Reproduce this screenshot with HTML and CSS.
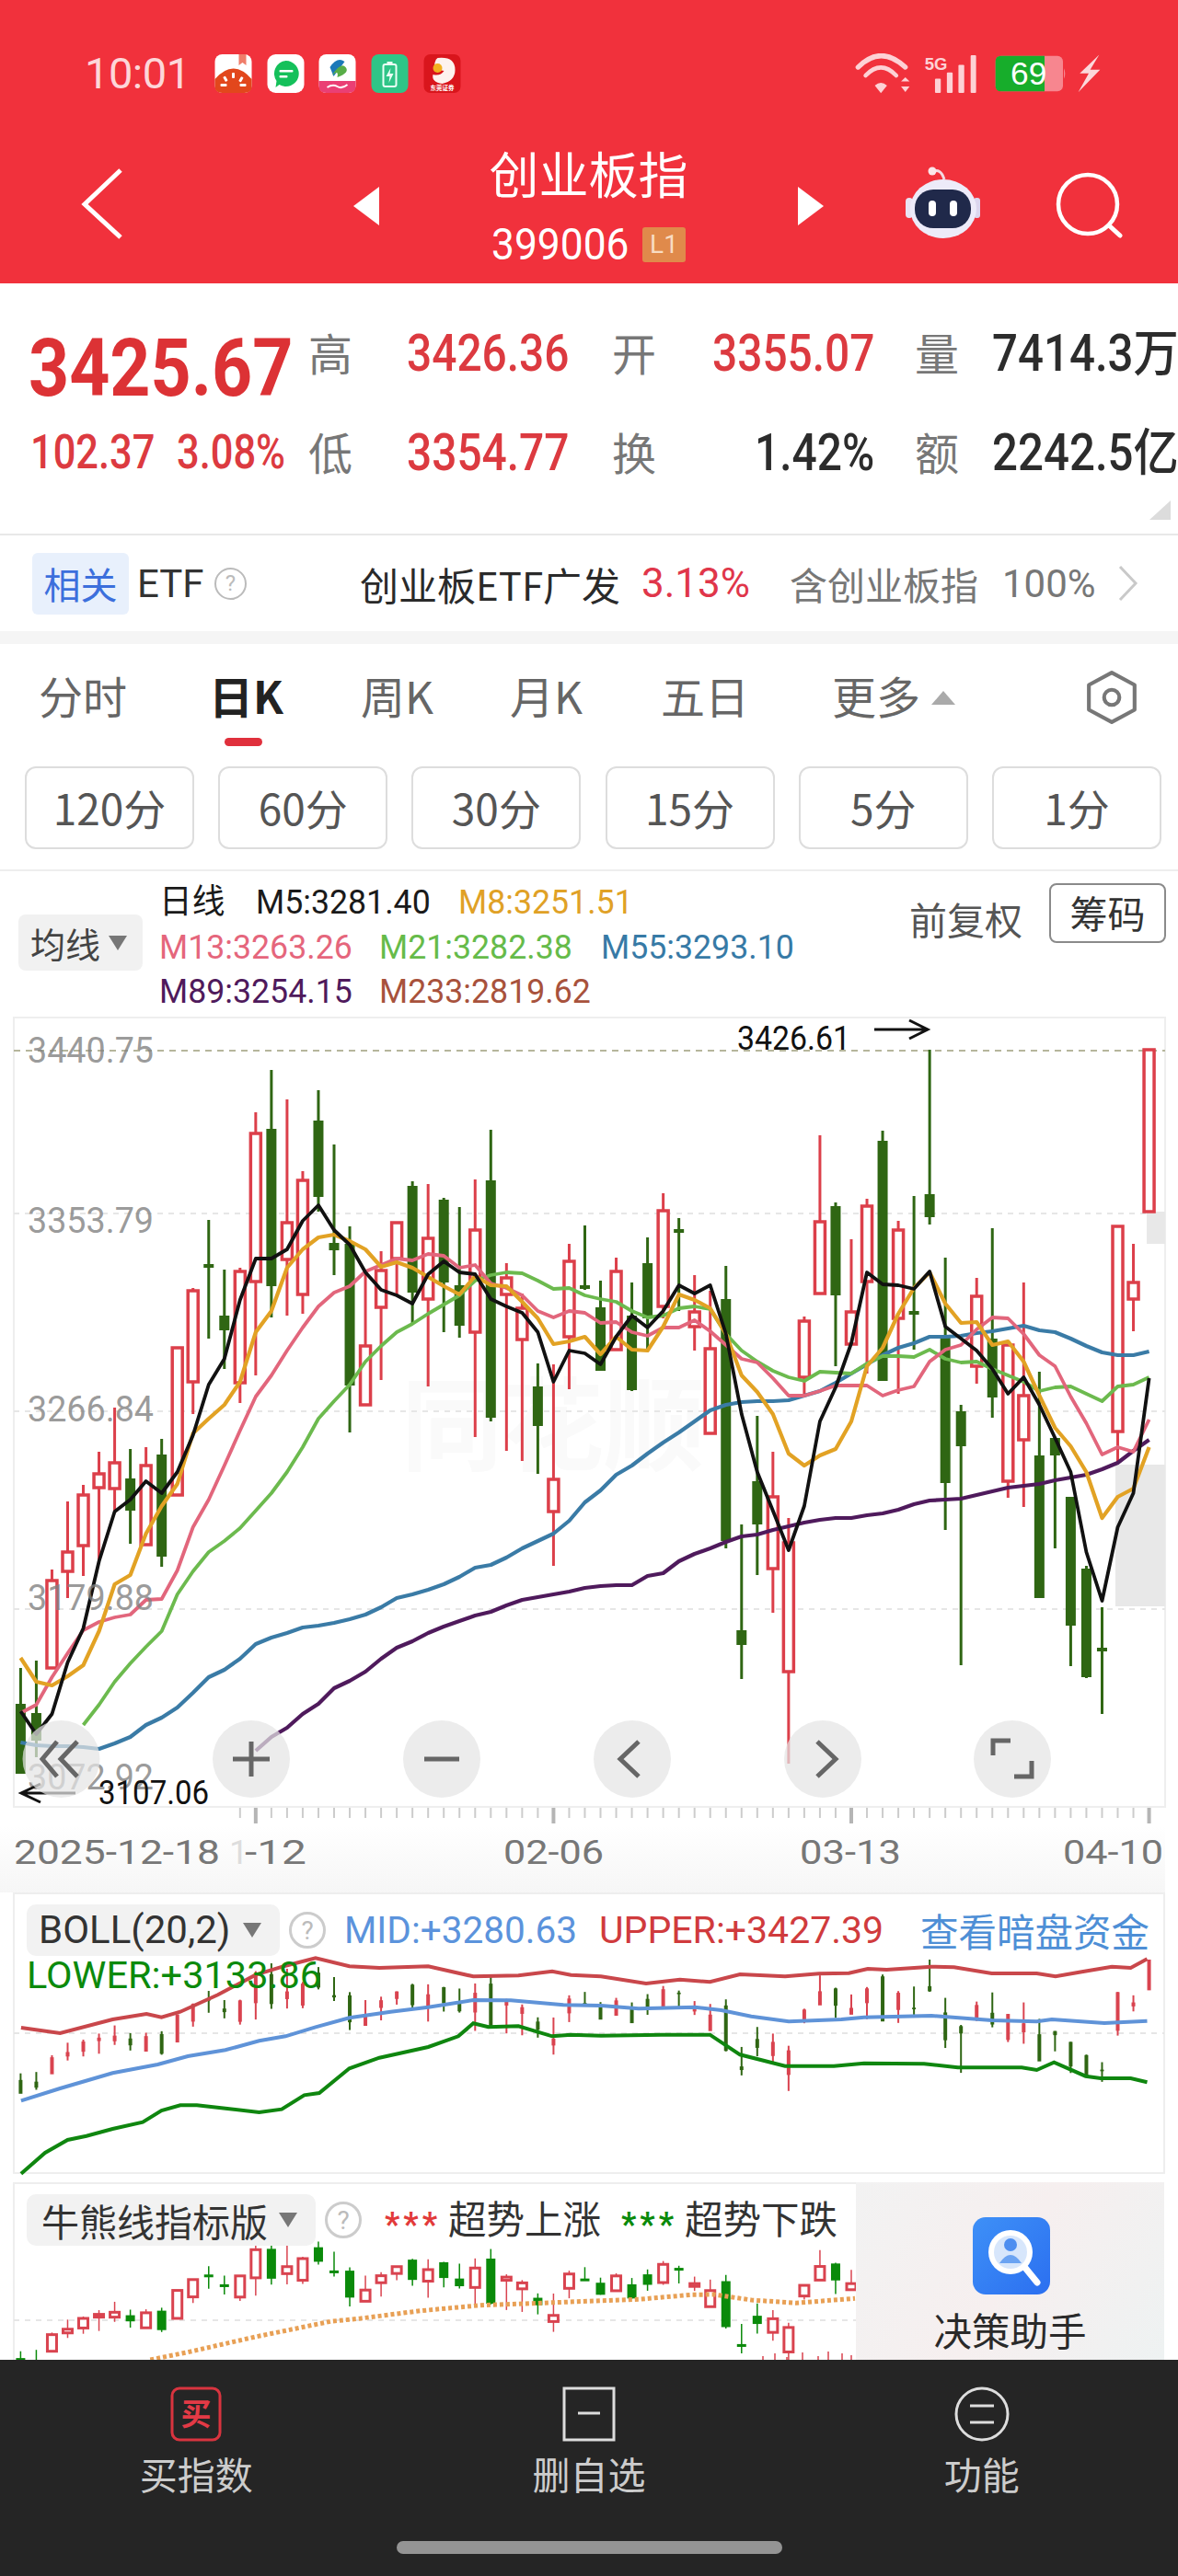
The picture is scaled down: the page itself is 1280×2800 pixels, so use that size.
FILE: index.html
```html
<!DOCTYPE html>
<html lang="zh-CN">
<head>
<meta charset="utf-8">
<title>创业板指 399006</title>
<link rel="stylesheet" href="styles.css">
</head>
<body>
<div class="phone">

<header class="top">
  <div class="status">
    <span class="time">10:01</span>
    <div class="apps">
      <svg class="app" viewBox="0 0 40 42"><rect width="40" height="42" rx="8" fill="#fff"/><path d="M0 27Q20 4 40 27V34Q40 42 32 42H8Q0 42 0 34Z" fill="#e2471c"/><path d="M26 0h8v12l-4-3-4 3z" fill="#ef7d6a"/><g fill="#fff"><rect x="18.500" y="20" width="3" height="6" rx="1"/><rect x="10" y="24" width="3" height="6" rx="1" transform="rotate(-30 11 27)"/><rect x="27" y="24" width="3" height="6" rx="1" transform="rotate(30 28 27)"/><rect x="6" y="32" width="7" height="3" rx="1"/><rect x="27" y="32" width="7" height="3" rx="1"/></g></svg>
      <svg class="app" viewBox="0 0 40 42"><rect width="40" height="42" rx="9" fill="#fff"/><path d="M20 7a14 14 0 1 1-7 26l-4 3 1-7A14 14 0 0 1 20 7z" fill="#14c05a"/><rect x="13" y="17" width="15" height="2.500" rx="1" fill="#fff"/><rect x="13" y="23" width="9" height="2.500" rx="1" fill="#fff"/></svg>
      <svg class="app" viewBox="0 0 40 42"><rect width="40" height="42" rx="8" fill="#fff"/><path d="M0 29H40V34Q40 42 32 42H8Q0 42 0 34Z" fill="#ea3f74"/><path d="M12 14Q20 2 28 8L16 24Z" fill="#1b78b8"/><path d="M14 23Q24 8 29 14T20 25Q22 16 14 23Z" fill="#58ad47"/><path d="M9 36q6-4 11-1t11-2" stroke="#fff" stroke-width="2" fill="none"/></svg>
      <svg class="app" viewBox="0 0 40 42"><rect width="40" height="42" rx="8" fill="#2fc587"/><rect x="13" y="11" width="14" height="24" rx="2" fill="none" stroke="#eafff5" stroke-width="2"/><rect x="17" y="8" width="6" height="3" fill="#eafff5"/><path d="M21 15l-5 9h4l-1 7 5-10h-4z" fill="#eafff5"/></svg>
      <svg class="app" viewBox="0 0 40 42"><rect width="40" height="42" rx="7" fill="#d9151c"/><path d="M15 4Q34 2 34 17Q34 29 20 32Q8 30 10 22Q18 24 22 18Q10 16 12 9Q13 5 15 4Z" fill="#fdf2ee"/><circle cx="15" cy="15" r="5" fill="#f2b01f"/><text class="app-txt" x="20" y="39" text-anchor="middle">东莞证券</text></svg>
    </div>
    <div class="sys">
      <svg class="ic-wifi" viewBox="25 20 190 135"><g fill="none" stroke="#fdd1d5" stroke-linecap="round"><path d="M35 65Q110-10 190 65" stroke-width="16"/><path d="M60 92Q110 40 160 92" stroke-width="14"/></g><g fill="#fdd1d5"><path d="M90 125Q110 108 130 125L110 150Z"/><path d="M176 112L190 98 204 112Z"/><path d="M176 128L190 146 204 128Z"/></g></svg>
      <svg class="ic-signal" viewBox="250 22 175 133"><text class="sig-txt" x="252" y="76">5G</text><g fill="#fdd1d5"><rect x="286" y="105" width="19" height="47" rx="3"/><rect x="325" y="85" width="19" height="67" rx="3"/><rect x="363" y="60" width="19" height="92" rx="3"/><rect x="403" y="28" width="18" height="124" rx="3"/></g></svg>
      <svg class="ic-batt" viewBox="480 30 240 125"><rect x="485" y="35" width="220" height="115" rx="18" fill="#f7868f"/><path d="M503 35H645V150H503Q485 150 485 132V53Q485 35 503 35Z" fill="#17ad2b"/><path d="M708 75q8 17 0 35z" fill="#f7868f"/><text class="batt-txt" x="593" y="130" text-anchor="middle">69</text></svg>
      <svg class="ic-bolt" viewBox="750 28 80 130"><path d="M825 30L760 92 790 92 755 155 828 80 795 80Z" fill="#fbd8db"/></svg>
    </div>
  </div>
  <div class="nav">
    <svg class="back" viewBox="88 183 46 78"><path d="M131 185L92 222 131 258" fill="none" stroke="#fff" stroke-width="5"/></svg>
    <svg class="tri-l" viewBox="0 0 28 42"><path d="M28 0V42L0 21Z" fill="#fff"/></svg>
    <div class="title-box">
      <div class="title">创业板指</div>
      <div class="code-row"><span class="code"><span class="cond code-in">399006</span></span><span class="lv">L1</span></div>
    </div>
    <svg class="tri-r" viewBox="0 0 28 42"><path d="M0 0V42L28 21Z" fill="#fff"/></svg>
    <svg class="robot" viewBox="984 180 81 80">
      <path d="M1013 187Q1022 182 1026 195" fill="none" stroke="#f3d9e2" stroke-width="3"/><circle cx="1013" cy="186" r="4.500" fill="#fbe6ea"/>
      <rect x="984" y="215" width="8" height="22" rx="4" fill="#e9e3f3"/><rect x="1058" y="215" width="7" height="22" rx="3" fill="#dcd6ee"/>
      <ellipse cx="1025" cy="227" rx="36" ry="32" fill="#edebf9"/>
      <rect x="994" y="206" width="61" height="42" rx="20" fill="#20294a"/>
      <rect x="1009" y="218" width="8" height="17" rx="4" fill="#fff"/><rect x="1032" y="218" width="8" height="17" rx="4" fill="#fff"/>
    </svg>
    <svg class="search" viewBox="1145 186 74 74"><circle cx="1180" cy="222" r="32" fill="none" stroke="#fff" stroke-width="4.500"/><path d="M1203 245L1215 256" stroke="#fff" stroke-width="5" stroke-linecap="round"/></svg>
  </div>
</header>

<section class="quote">
  <div class="price"><span class="cond bigp">3425.67</span></div>
  <div class="lab">高</div><div class="val up"><span class="cond">3426.36</span></div>
  <div class="lab">开</div><div class="val up"><span class="cond">3355.07</span></div>
  <div class="lab">量</div><div class="val dark"><span class="cond wide">7414.3万</span></div>
  <div class="chg"><span class="cond c1">102.37</span><span class="cond c2">3.08%</span></div>
  <div class="lab">低</div><div class="val up"><span class="cond">3354.77</span></div>
  <div class="lab">换</div><div class="val dark r"><span class="cond">1.42%</span></div>
  <div class="lab">额</div><div class="val dark"><span class="cond wide">2242.5亿</span></div>
  <span class="fold"></span>
</section>

<section class="etf">
  <span class="etf-tag">相关</span>
  <span class="etf-name">ETF</span>
  <span class="qmark q-etf">?</span>
  <span class="etf-fund">创业板ETF广发</span>
  <span class="etf-pct">3.13%</span>
  <span class="etf-hold">含创业板指</span>
  <span class="etf-hold-n">100%</span>
  <svg class="etf-more" viewBox="0 0 22 40"><path d="M2 2L19 20 2 38" fill="none" stroke="#c9c9c9" stroke-width="3"/></svg>
</section>
<div class="gap"></div>

<nav class="tabs">
  <span class="tab">分时</span>
  <span class="tab on">日K</span>
  <span class="tab">周K</span>
  <span class="tab">月K</span>
  <span class="tab">五日</span>
  <span class="tab more">更多<i class="up-tri"></i></span>
  <svg class="hex" viewBox="0 0 56 58"><path d="M28 3L52 16V42L28 55 4 42V16Z" fill="none" stroke="#777" stroke-width="4" stroke-linejoin="round"/><circle cx="28" cy="29" r="8" fill="none" stroke="#777" stroke-width="4"/></svg>
</nav>

<div class="periods">
  <span class="period">120分</span><span class="period">60分</span><span class="period">30分</span><span class="period">15分</span><span class="period">5分</span><span class="period">1分</span>
</div>

<section class="legend">
  <div class="chip ma-chip">均线<i class="dn-tri"></i></div>
  <div class="leg-rows">
    <div class="leg-row"><span class="w-a ink"><span class="cond">日线</span></span><span class="w-b ink"><span class="cond">M5:3281.40</span></span><span class="c-m8"><span class="cond">M8:3251.51</span></span></div>
    <div class="leg-row"><span class="w-c c-m13"><span class="cond">M13:3263.26</span></span><span class="w-d c-m21"><span class="cond">M21:3282.38</span></span><span class="c-m55"><span class="cond">M55:3293.10</span></span></div>
    <div class="leg-row"><span class="w-c c-m89"><span class="cond">M89:3254.15</span></span><span class="c-m233"><span class="cond">M233:2819.62</span></span></div>
  </div>
  <div class="adj">前复权</div>
  <div class="chips">筹码</div>
</section>

<svg id="kline" class="kline" viewBox="0 1105 1280 952" width="1280" height="952">
  <defs>
    <linearGradient id="axisbg" x1="0" y1="0" x2="0" y2="1"><stop offset="0" stop-color="#fff"/><stop offset="1" stop-color="#f6f6f6"/></linearGradient>
  </defs>
  <rect x="0" y="1985" width="1266" height="72" fill="url(#axisbg)"/>
  <rect class="frame" x="15" y="1106" width="1251" height="858"/>
  <text class="wm" x="436" y="1590">同花顺</text>
  <path class="grid-top" d="M15 1142H1266"/>
  <path class="grid" d="M15 1319H1266M15 1534H1266M15 1749H1266"/>
  <rect class="shade" x="1246" y="1317" width="20" height="35"/>
  <rect class="shade" x="1212" y="1592" width="54" height="154"/>
  <g id="k-candles"></g>
  <g id="k-lines"></g>
  <g class="ylab">
    <text x="30" y="1155" textLength="137" lengthAdjust="spacingAndGlyphs">3440.75</text>
    <text x="30" y="1340" textLength="137" lengthAdjust="spacingAndGlyphs">3353.79</text>
    <text x="30" y="1545" textLength="137" lengthAdjust="spacingAndGlyphs">3266.84</text>
    <text x="30" y="1750" textLength="137" lengthAdjust="spacingAndGlyphs">3179.88</text>
    <text x="30" y="1945" textLength="137" lengthAdjust="spacingAndGlyphs">3072.92</text>
  </g>
  <g class="note">
    <text x="801" y="1141" textLength="123" lengthAdjust="spacingAndGlyphs">3426.61</text>
    <path d="M950 1119H1007M988 1109L1008 1119 988 1129"/>
    <path d="M82 1949H24M44 1939L23 1949 44 1959"/>
  </g>
  <g class="fab-bg">
    <circle cx="66.500" cy="1912" r="42"/><circle cx="273" cy="1912" r="42"/><circle cx="480" cy="1912" r="42"/><circle cx="687" cy="1912" r="42"/><circle cx="894" cy="1912" r="42"/><circle cx="1100" cy="1912" r="42"/>
  </g>
  <g class="fab-ic">
    <path d="M62 1893L46 1912 62 1931M84 1893L66 1912 84 1931"/>
    <path d="M273 1893V1931M253 1912H293"/>
    <path d="M461 1912H499"/>
    <path d="M694 1893L674 1912 694 1931"/>
    <path d="M888 1893L908 1912 888 1931"/>
    <path d="M1080 1908V1892H1099M1122 1914V1931H1103" transform="translate(-1 0)"/>
  </g>
  <text class="note-t" x="107" y="1961" textLength="120" lengthAdjust="spacingAndGlyphs">3107.06</text>
  <g id="k-ticks"></g>
  <g class="dates">
    <text x="15" y="2026" textLength="224" lengthAdjust="spacingAndGlyphs">2025-12-18</text>
    <text class="faint" x="249" y="2026">1</text>
    <text x="266" y="2026" textLength="67" lengthAdjust="spacingAndGlyphs">-12</text>
    <text x="547" y="2026" textLength="109" lengthAdjust="spacingAndGlyphs">02-06</text>
    <text x="869" y="2026" textLength="110" lengthAdjust="spacingAndGlyphs">03-13</text>
    <text x="1155" y="2026" textLength="109" lengthAdjust="spacingAndGlyphs">04-10</text>
  </g>
</svg>

<section class="panel boll">
  <svg id="bollsvg" viewBox="0 2057 1280 315" width="1280" height="315">
    <rect class="frame" x="15" y="2058" width="1250" height="304"/>
    <path class="grid" d="M15 2210H1265"/>
  </svg>
  <div class="head boll-head">
    <div class="head-row">
      <div class="chip boll-chip">BOLL(20,2)<i class="dn-tri"></i></div>
      <span class="qmark q-boll">?</span>
      <span class="mid">MID:+3280.63</span>
      <span class="upper">UPPER:+3427.39</span>
      <span class="dark-pool">查看暗盘资金</span>
    </div>
    <div class="lower">LOWER:+3133.86</div>
  </div>
</section>

<section class="panel bull">
  <div class="bull-chart">
    <svg id="bullsvg" viewBox="0 2372 930 193" width="930" height="193">
      <path class="frame-edge" d="M15 2565V2373H930"/>
      <path class="grid" d="M15 2522H930"/>
    </svg>
    <div class="head bull-head">
      <div class="chip bull-chip">牛熊线指标版<i class="dn-tri"></i></div>
      <span class="qmark q-bull">?</span>
      <span class="stars s-red">***</span><span class="trend">超势上涨</span>
      <span class="stars s-green">***</span><span class="trend">超势下跌</span>
    </div>
  </div>
  <aside class="promo">
    <svg class="promo-ic" viewBox="0 0 84 84"><defs><linearGradient id="pb" x1="0" y1="0" x2="1" y2="1"><stop offset="0" stop-color="#3e90f7"/><stop offset="1" stop-color="#2b6ff0"/></linearGradient></defs><rect width="84" height="84" rx="14" fill="url(#pb)"/><circle cx="41" cy="38" r="24" fill="#fff"/><circle cx="41" cy="38" r="18" fill="#d7e6fb"/><circle cx="41" cy="30" r="7" fill="#4d8ef0"/><path d="M29 50Q41 32 53 50Z" fill="#6ba3f2"/><path d="M57 55L70 71" stroke="#fff" stroke-width="7" stroke-linecap="round"/></svg>
    <div class="promo-txt">决策助手</div>
  </aside>
</section>

<footer class="foot">
  <div class="foot-grid">
    <div class="foot-item">
      <svg class="foot-ic" viewBox="0 0 60 60"><rect x="4" y="2" width="52" height="56" rx="8" fill="none" stroke="#d9343f" stroke-width="3"/><text class="buy-txt" x="30" y="42" text-anchor="middle">买</text></svg>
      <span class="foot-lab">买指数</span>
    </div>
    <div class="foot-item">
      <svg class="foot-ic" viewBox="0 0 60 60"><rect x="3" y="2" width="54" height="56" fill="none" stroke="#ddd" stroke-width="3"/><path d="M18 29H42" stroke="#ddd" stroke-width="3"/></svg>
      <span class="foot-lab">删自选</span>
    </div>
    <div class="foot-item">
      <svg class="foot-ic" viewBox="0 0 60 60"><circle cx="30" cy="30" r="28" fill="none" stroke="#ddd" stroke-width="3"/><path d="M17 21H43M17 39H43" stroke="#ddd" stroke-width="3"/></svg>
      <span class="foot-lab">功能</span>
    </div>
  </div>
  <div class="home"></div>
</footer>

</div>
<script src="chart.js"></script>
</body>
</html>
```

FILE: styles.css
```css
*{box-sizing:border-box}
html,body{margin:0;padding:0;background:#fff}
body{font-family:Roboto,"Noto Sans CJK SC",sans-serif;color:#333}
.phone{width:1280px;height:2800px;overflow:hidden;position:relative;background:#fff}
svg{display:block}
i{font-style:normal}
.cond{display:inline-block;transform:scaleX(.88);transform-origin:left center;white-space:nowrap}

/* header */
.top{height:308px;background:#f1313c;padding-top:59px}
.status{display:flex;height:42px;padding:0 84px 0 92px;align-items:center}
.time{width:141px;font-size:47px;line-height:42px;color:#fdd6d9;letter-spacing:-.5px}
.apps{display:flex;gap:15.700px}
.app{width:41px;height:42px}
.app-txt{font:700 6.500px "Noto Sans CJK SC",sans-serif;fill:#fff}
.sys{margin-left:auto;display:flex;align-items:center}
.ic-wifi{width:63px;height:45px}
.ic-signal{width:58px;height:44px;margin-left:12px}
.sig-txt{font:700 56px "Liberation Sans",sans-serif;fill:#fdd1d5}
.ic-batt{width:80px;height:42px;margin-left:18px}
.batt-txt{font:500 106px "Liberation Sans",sans-serif;fill:#fff}
.ic-bolt{width:26px;height:44px;margin-left:10px}
.nav{display:grid;grid-template-columns:384px 28px 455px 27px 90px 81px 82px 74px;margin-top:57px}
.back{width:46px;height:78px;margin:25px 0 0 88px}
.tri-l,.tri-r{width:28px;height:42px;margin-top:45px}
.title-box{display:flex;flex-direction:column;align-items:center}
.title{font:400 54px/60px "Noto Sans CJK SC",sans-serif;color:#fff}
.code-row{display:flex;align-items:center;gap:16px;margin-top:18px;height:60px}
.code{display:block;width:148px;font:400 49px/60px Roboto,sans-serif;color:#fff}
.code-in{transform:scaleX(.905)}
.lv{width:47px;height:38px;background:#e08a4b;color:#f8dcc2;font:400 28px/38px Roboto,sans-serif;text-align:center;border-radius:3px}
.robot{grid-column:6;width:81px;height:80px;margin-top:22px}
.search{grid-column:8;width:74px;height:74px;margin-top:28px}

/* quote */
.quote{height:274px;border-bottom:2px solid #e8e8e8;padding:22px 0 0 33px;display:grid;grid-template-columns:302px 107px 223px 109px 220px 84px 202px;grid-template-rows:108px 108px;position:relative}
.price{align-self:end;display:flex;height:76px;margin-left:-2px}
.bigp{font:700 88px/76px Roboto,sans-serif;color:#dc3235;transform:scaleX(.875)}
.lab{font:400 48px/104px "Noto Sans CJK SC",sans-serif;color:#777}
.val{font:400 55px/108px Roboto,"Noto Sans CJK SC",sans-serif;white-space:nowrap}
.val .cond{transform:scaleX(.87)}
.val .wide{transform:scaleX(.895)}
.up{color:#dc3a40;font-weight:500}
.dark{color:#2c2c2c;font-weight:500}
.r{padding-left:46px}
.chg{font:500 52px/108px Roboto,sans-serif;color:#dc3a40;display:flex}
.chg .cond{transform:scaleX(.835)}
.c1{width:160px}
.c2{margin-left:-1px}
.fold{position:absolute;right:8px;bottom:15px;width:0;height:0;border-style:solid;border-width:0 0 21px 23px;border-color:transparent transparent #dcdcdc transparent}

/* etf */
.etf{height:104px;display:flex;align-items:center;padding-left:35px;font-family:"Noto Sans CJK SC",sans-serif}
.etf-tag{width:105px;height:67px;background:#e8f0fc;border-radius:6px;color:#3c6fdc;font-size:40px;line-height:67px;text-align:center}
.etf-name{font:400 42px Roboto,sans-serif;margin-left:9px;width:84px;color:#333}
.qmark{display:inline-block;border:2px solid #bbb;border-radius:50%;color:#bbb;text-align:center;font-family:Roboto,sans-serif}
.q-etf{width:35px;height:35px;font-size:24px;line-height:31px}
.etf-fund{margin-left:123px;font-size:42px;color:#2a2a2a;width:306px;white-space:nowrap}
.etf-pct{font:400 44px Roboto,sans-serif;color:#e0364a;width:161px}
.etf-hold{font-size:41px;color:#777;width:231px}
.etf-hold-n{font:400 42px Roboto,sans-serif;color:#777;width:126px;white-space:nowrap}
.etf-more{width:22px;height:40px}
.gap{height:14px;background:#f5f5f5}

/* tabs */
.tabs{height:133px;display:grid;grid-template-columns:185px 165px 162px 164px 186px 275px 60px;padding:25px 0 0 42px;position:relative}
.tab{font:400 48px/60px "Noto Sans CJK SC",sans-serif;color:#666;position:relative;white-space:nowrap}
.tab.on{color:#222;font-weight:700}
.tab.on::after{content:"";position:absolute;left:17px;top:77px;width:41px;height:9px;border-radius:5px;background:#e0303c}
.up-tri{display:inline-block;width:0;height:0;border-style:solid;border-width:0 13px 15px;border-color:transparent transparent #aaa;margin-left:12px;vertical-align:10px}
.hex{width:58px;height:60px;margin-top:3px}

/* periods */
.periods{height:114px;padding-bottom:22px;border-bottom:2px solid #eee;display:grid;grid-template-columns:repeat(6,184px);gap:26.200px;padding-left:27px}
.period{border:2px solid #ddd;border-radius:12px;text-align:center;font:400 46px/84px "Noto Sans CJK SC",sans-serif;color:#555}

/* legend */
.legend{height:158px;display:flex;padding-left:20px;position:relative}
.chip{background:#f1f1f1;border-radius:8px;display:flex;align-items:center;font-family:"Noto Sans CJK SC",sans-serif;white-space:nowrap}
.ma-chip{width:135px;height:61px;margin-top:47px;padding-left:13px;font-size:38px;color:#444}
.dn-tri{display:inline-block;width:0;height:0;border-style:solid;border-width:16px 10px 0;border-color:#777 transparent transparent;margin-left:9px}
.leg-rows{margin:10px 0 0 18px;width:800px;font:400 37px/48.500px Roboto,"Noto Sans CJK SC",sans-serif}
.leg-row{display:flex;height:48.500px}
.leg-row .cond{transform:scaleX(.965)}
.w-a{width:105px}
.w-b{width:220px}
.w-c{width:239px}
.w-d{width:241px}
.ink{color:#1a1a1a}
.c-m8{color:#e0a126}
.c-m13{color:#e5667c}
.c-m21{color:#66bb4a}
.c-m55{color:#377aa6}
.c-m89{color:#4f1a5c}
.c-m233{color:#a8523c}
.adj{position:absolute;left:988px;top:25px;font:400 41px/52px "Noto Sans CJK SC",sans-serif;color:#555}
.chips{position:absolute;left:1140px;top:13px;width:127px;height:65px;border:2px solid #8a8a8a;border-radius:8px;text-align:center;font:400 41px/58px "Noto Sans CJK SC",sans-serif;color:#333}

/* main chart */
.kline{display:block}
.frame{fill:none;stroke:#eee;stroke-width:2}
.frame-edge{fill:none;stroke:#eee;stroke-width:2}
.wm{font:700 110px "Noto Sans CJK SC",sans-serif;fill:#fafafa}
.grid-top{stroke:#b6b69c;stroke-width:2;stroke-dasharray:7 6;fill:none}
.grid{stroke:#e6e6e6;stroke-width:2;stroke-dasharray:6 6;fill:none}
.shade{fill:#e8e8e8}
.ylab text{font:400 38px Roboto,sans-serif;fill:#808080;fill-opacity:.8}
.note text,.note-t{font:400 36px Roboto,sans-serif;fill:#111}
.note path{fill:none;stroke:#111;stroke-width:3}
.fab-bg circle{fill:#e4e4e4;fill-opacity:.72}
.fab-ic path{fill:none;stroke:#666;stroke-width:5}
.dates text{font:400 37px Roboto,sans-serif;fill:#777}
.dates .faint{fill:#ddd}
.cr{fill:#fff;stroke:#dc3f4a;stroke-width:3.500}
.cg{fill:#2f6613;stroke:none}
.wr{stroke:#dc3f4a;stroke-width:3;fill:none}
.wg{stroke:#2f6613;stroke-width:3;fill:none}
.l{fill:none;stroke-linejoin:round}
.m5{stroke:#111;stroke-width:3.800}
.m8{stroke:#e2a224;stroke-width:4.200}
.m13{stroke:#e2667c;stroke-width:3.800}
.m21{stroke:#6cba4e;stroke-width:3.800}
.m55{stroke:#3a7ba6;stroke-width:4.200}
.m89{stroke:#4f1a5c;stroke-width:4.200}
.t{stroke:#ccc;stroke-width:2}
.tb{stroke:#b5b5b5;stroke-width:4}

/* indicator panels */
.panel{position:relative}
.boll{height:315px}
.head{position:absolute;left:29px;font-family:Roboto,"Noto Sans CJK SC",sans-serif}
.boll-head{top:13px;right:31px}
.head-row{display:flex;align-items:center;height:56px}
.boll-chip{width:275px;height:56px;padding-left:13px;font:400 42px/56px Roboto,sans-serif;color:#333;background:#f2f2f2;border-radius:10px}
.boll-chip .dn-tri{margin-left:14px}
.q-boll,.q-bull{width:40px;height:40px;font-size:28px;line-height:36px;margin-left:10px;border-width:3px;border-color:#ccc;flex:none}
.mid{font-size:40.500px;color:#5b93dc;margin-left:20px;white-space:nowrap}
.upper{font-size:41px;color:#d03b3d;margin-left:24px;white-space:nowrap}
.dark-pool{font:400 41.500px "Noto Sans CJK SC",sans-serif;color:#4e8fd6;margin-left:auto;white-space:nowrap}
.lower{font-size:41.500px;line-height:42px;color:#0c8a0c;white-space:nowrap}
.bc-r{stroke:#d9434f;fill:none}
.bc-g{stroke:#2f6613;fill:none}
.b-up{stroke:#c9474b;stroke-width:4;fill:none}
.b-mid{stroke:#5f93d8;stroke-width:4;fill:none}
.b-low{stroke:#0f860f;stroke-width:4;fill:none}

.bull{height:193px;display:flex}
.bull-chart{width:930px;height:193px;position:relative}
.bull-head{top:13px;left:29px;display:flex;align-items:center;height:56px}
.bull-chip{width:314px;height:56px;padding-left:16px;font-size:41px;color:#333;background:#f2f2f2;border-radius:10px}
.bull-chip .dn-tri{margin-left:12px}
.stars{font:700 36px/56px Roboto,sans-serif;letter-spacing:4px;padding-top:9px;width:69px}
.s-red{color:#e23a3a;margin-left:25px}
.s-green{color:#0a8a0a;margin-left:22px}
.trend{font:400 41.500px/56px "Noto Sans CJK SC",sans-serif;color:#333;white-space:nowrap;margin-top:-6px}
.bh-r{fill:#fff;stroke:#d9434f;stroke-width:3}
.bh-g{fill:#0a8a0a}
.bw-r{stroke:#d9434f;stroke-width:1.500}
.bw-g{stroke:#0a8a0a;stroke-width:1.500}
.ma-dot{fill:none;stroke:#e8a055;stroke-width:5;stroke-dasharray:4 3}
.promo{width:335px;height:193px;background:linear-gradient(120deg,#f2f2f2,#f6efef 50%,#eef2f2);display:flex;flex-direction:column;align-items:center;padding-top:38px}
.promo-ic{width:84px;height:84px;margin-left:2px}
.promo-txt{font:400 41.500px/50px "Noto Sans CJK SC",sans-serif;color:#2a2a2a;margin-top:13px}

/* footer */
.foot{height:235px;background:#252525;padding-top:29px}
.foot-grid{display:grid;grid-template-columns:repeat(3,1fr)}
.foot-item{display:flex;flex-direction:column;align-items:center}
.foot-ic{width:60px;height:60px}
.buy-txt{font:700 33px "Noto Sans CJK SC",sans-serif;fill:#e33a46}
.foot-lab{font:400 41px/50px "Noto Sans CJK SC",sans-serif;color:#ccc;margin-top:9px}
.home{width:419px;height:14px;border-radius:7px;background:#949494;margin:49px auto 0}
```

FILE: chart.js
```js
var NS = 'http://www.w3.org/2000/svg';
function add(parent, tag, attrs) {
  var e = document.createElementNS(NS, tag);
  for (var k in attrs) e.setAttribute(k, attrs[k]);
  parent.appendChild(e);
  return e;
}
function X(i) { return 22.4 + 17.03 * i; }

// type, high, low, bodyTop, bodyBottom (page pixels of the main chart)
var C = [
['g',1813,1928,1852,1928],['g',1805,1910,1862,1892],['r',1706,1813,1718,1813],['r',1632,1737,1687,1708],
['r',1614,1713,1625,1680],['r',1578,1697,1602,1617],['r',1530,1645,1590,1618],['g',1575,1678,1607,1642],
['r',1573,1679,1593,1679],['g',1564,1703,1581,1692],['r',1465,1625,1465,1625],['r',1400,1537,1403,1502],
['g',1326,1455,1374,1378],['g',1380,1488,1430,1446],['r',1378,1525,1382,1503],['r',1209,1495,1232,1393],
['g',1163,1432,1227,1398],['r',1195,1430,1329,1369],['r',1273,1428,1283,1407],['g',1185,1317,1218,1301],
['g',1244,1386,1351,1359],['g',1333,1557,1352,1506],['r',1380,1527,1463,1527],['r',1360,1500,1381,1421],
['r',1329,1407,1329,1368],['g',1284,1438,1289,1405],['r',1287,1507,1346,1412],['g',1302,1448,1304,1394],
['g',1312,1454,1397,1441],['r',1282,1562,1337,1448],['g',1228,1545,1283,1541],['r',1373,1577,1389,1407],
['r',1406,1588,1422,1456],['g',1482,1602,1507,1550],['r',1483,1702,1608,1643],['r',1352,1510,1371,1453],
['g',1332,1402,1397,1401],['g',1392,1490,1421,1490],['r',1367,1468,1382,1467],['g',1394,1512,1430,1511],
['g',1345,1467,1373,1433],['r',1297,1433,1316,1420],['g',1324,1425,1336,1340],['r',1386,1468,1426,1442],
['r',1403,1558,1466,1558],['g',1376,1683,1412,1675],['g',1657,1825,1772,1788],['g',1539,1712,1610,1657],
['r',1578,1753,1627,1705],['r',1650,1917,1677,1817],['r',1431,1517,1436,1497],['r',1234,1407,1328,1406],
['g',1307,1485,1311,1408],['r',1347,1461,1426,1461],['r',1303,1493,1311,1393],['g',1229,1501,1240,1501],
['r',1327,1515,1337,1433],['g',1300,1467,1425,1429],['g',1141,1331,1298,1323],['g',1367,1663,1453,1612],
['g',1527,1810,1534,1572],['r',1389,1504,1409,1485],['g',1335,1541,1455,1519],['r',1462,1628,1462,1610],
['r',1394,1638,1517,1565],['g',1491,1737,1582,1737],['g',1563,1683,1563,1582],['g',1627,1811,1627,1767],
['g',1702,1824,1705,1823],['g',1747,1863,1791,1795],['r',1332,1590,1333,1556],['r',1352,1447,1394,1412],
['r',1141,1317,1141,1317]
];

var M = {
m5:[0,1860,1885,1863,1807,1770,1697,1643,1630,1610,1623,1600,1560,1505,1477,1413,1368,1368,1358,1327,1310,1337,1353,1383,1402,1408,1417,1385,1371,1383,1385,1412,1420,1427,1448,1502,1468,1471,1483,1453,1430,1443,1425,1397,1406,1397,1450,1537,1600,1642,1685,1637,1545,1508,1460,1383,1396,1397,1401,1382,1442,1455,1468,1488,1515,1497,1527,1563,1600,1687,1740,1660,1623,1498],
m8:[0,1802,1828,1832,1822,1810,1773,1722,1712,1667,1637,1613,1558,1542,1527,1502,1448,1425,1378,1358,1345,1342,1349,1358,1377,1372,1378,1388,1398,1407,1387,1397,1398,1415,1433,1461,1458,1453,1472,1453,1467,1468,1442,1407,1413,1422,1450,1495,1513,1537,1580,1593,1582,1575,1545,1485,1465,1428,1400,1383,1417,1438,1437,1462,1458,1480,1517,1552,1572,1600,1650,1627,1618,1573],
m13:[0,1862,1853,1823,1797,1772,1763,1758,1755,1739,1738,1707,1660,1630,1593,1555,1518,1495,1468,1443,1420,1405,1398,1382,1375,1368,1370,1363,1365,1378,1375,1395,1400,1408,1425,1432,1425,1427,1438,1437,1448,1452,1443,1443,1435,1447,1462,1477,1481,1498,1517,1517,1512,1506,1506,1506,1517,1511,1507,1480,1467,1462,1445,1432,1433,1450,1473,1485,1518,1547,1581,1573,1578,1543],
m21:[4,1875,1853,1828,1808,1790,1773,1733,1708,1687,1675,1661,1642,1623,1600,1573,1542,1523,1505,1480,1463,1448,1439,1428,1418,1408,1392,1386,1383,1384,1392,1401,1400,1408,1412,1415,1425,1432,1430,1422,1420,1423,1450,1468,1480,1490,1497,1501,1491,1492,1493,1482,1474,1474,1475,1467,1477,1481,1480,1488,1495,1502,1512,1508,1507,1515,1523,1507,1505,1497],
m55:[0,1894,1897,1898,1898,1899,1901,1895,1888,1875,1867,1856,1840,1823,1815,1803,1787,1780,1775,1769,1767,1764,1760,1755,1747,1737,1733,1728,1722,1714,1704,1701,1693,1683,1675,1667,1653,1633,1620,1603,1593,1580,1568,1557,1545,1533,1527,1524,1523,1523,1522,1517,1512,1503,1493,1483,1473,1465,1460,1453,1453,1452,1449,1447,1444,1441,1446,1448,1455,1463,1470,1473,1473,1469],
m89:[15,1903,1888,1878,1863,1852,1835,1827,1817,1803,1791,1784,1775,1768,1762,1756,1752,1745,1739,1736,1733,1730,1726,1724,1723,1723,1713,1710,1697,1689,1683,1676,1670,1668,1663,1659,1655,1652,1650,1650,1647,1645,1641,1635,1631,1630,1629,1625,1621,1617,1615,1613,1609,1606,1603,1597,1590,1577,1565]
};

// main candles
var gc = document.getElementById('k-candles');
C.forEach(function (c, i) {
  var x = X(i), red = c[0] === 'r';
  add(gc, 'path', { 'class': red ? 'wr' : 'wg', d: 'M' + x + ' ' + c[1] + 'V' + c[2] });
  var h = Math.max(c[4] - c[3], 4);
  if (red) add(gc, 'rect', { 'class': 'cr', x: x - 5.5, y: c[3], width: 11, height: h });
  else add(gc, 'rect', { 'class': 'cg', x: x - 5.5, y: c[3], width: 11, height: h });
});

// moving averages
var gl = document.getElementById('k-lines');
['m89', 'm55', 'm21', 'm13', 'm8', 'm5'].forEach(function (k) {
  var a = M[k], start = a[0], pts = [];
  for (var j = 1; j < a.length; j++) pts.push(X(start + j - 1).toFixed(1) + ',' + a[j]);
  add(gl, 'polyline', { 'class': 'l ' + k, points: pts.join(' ') });
});

// axis ticks
var gt = document.getElementById('k-ticks');
for (var i = 14; i <= 72; i++) {
  var major = (i - 15) % 19 === 0;
  add(gt, 'path', { 'class': major ? 'tb' : 't', d: 'M' + X(i) + ' 1965V' + (major ? 1982 : 1976) });
}

// BOLL panel
var bs = document.getElementById('bollsvg');
function by(y) { return 2130 + (y - 1141) * 0.184; }
C.forEach(function (c, i) {
  var x = X(i), cls = c[0] === 'r' ? 'bc-r' : 'bc-g';
  add(bs, 'path', { 'class': cls, 'stroke-width': 2, d: 'M' + x + ' ' + by(c[1]) + 'V' + by(c[2]) });
  add(bs, 'path', { 'class': cls, 'stroke-width': 4, d: 'M' + x + ' ' + by(c[3]) + 'V' + (by(c[4]) + 1) });
});
function z8(p) {
  var out = [];
  for (var i = 0; i < p.length; i += 2) out.push((p[i] / 1.225).toFixed(1) + ',' + (2040 + p[i + 1] / 3).toFixed(1));
  return out.join(' ');
}
add(bs, 'polyline', { 'class': 'b-up', points: z8([28,492,80,510,150,465,195,447,215,458,240,440,290,385,340,320,380,290,420,265,465,292,505,297,570,292,630,325,690,322,735,308,760,320,800,325,860,348,905,335,945,343,985,318,1045,325,1090,316,1130,314,1155,300,1180,303,1240,293,1270,295,1320,315,1380,315,1405,325,1440,310,1480,293,1505,297,1527,268]) });
add(bs, 'polyline', { 'class': 'b-mid', points: z8([28,730,80,690,150,640,210,612,250,585,300,565,345,535,380,520,420,490,465,460,520,440,570,425,630,402,680,403,750,418,800,420,850,430,925,425,960,435,1000,455,1050,472,1120,465,1150,458,1240,453,1320,468,1380,472,1400,465,1470,477,1527,470]) });
add(bs, 'polyline', { 'class': 'b-low', points: z8([28,968,60,900,90,858,115,845,150,822,190,800,215,762,240,745,262,745,300,755,345,768,375,758,405,712,425,705,465,625,505,590,570,555,610,520,630,478,650,490,690,487,735,520,760,515,800,518,880,515,945,515,985,580,1045,617,1110,617,1150,608,1230,610,1275,622,1360,622,1380,630,1403,605,1445,650,1465,657,1505,657,1527,670]) });

// bull / bear panel
var ns = document.getElementById('bullsvg');
function ny(y) { return 2455 + (y - 1283) * 0.19; }
C.forEach(function (c, i) {
  var x = X(i), red = c[0] === 'r';
  if (x > 925) return;
  add(ns, 'path', { 'class': red ? 'bw-r' : 'bw-g', d: 'M' + x + ' ' + ny(c[1]) + 'V' + ny(c[2]) });
  var h = Math.max(ny(c[4]) - ny(c[3]), 3);
  add(ns, 'rect', { 'class': red ? 'bh-r' : 'bh-g', x: x - 5, y: ny(c[3]), width: 10, height: h });
});
add(ns, 'path', { 'class': 'bw-r', d: 'M829 2565V2561M842 2565V2558M855 2565V2562M872 2565V2557M889 2565V2561M900 2565V2556M915 2565V2558M925 2565V2560' });
var ma = [200,615,250,590,340,540,440,490,480,480,560,455,640,437,720,430,800,422,850,418,920,403,950,402,1000,420,1060,430,1110,420,1138,415], mp = [];
for (var n = 0; n < ma.length; n += 2) mp.push((ma[n] / 1.225).toFixed(1) + ',' + (2360 + ma[n + 1] / 3).toFixed(1));
add(ns, 'polyline', { 'class': 'ma-dot', points: mp.join(' ') });
```
